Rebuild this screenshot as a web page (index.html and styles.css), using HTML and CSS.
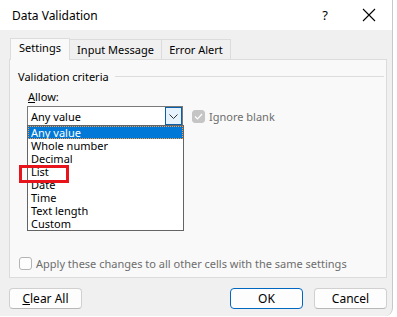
FILE: index.html
```html
<!DOCTYPE html>
<html lang="en">
  <head>
    <meta charset="UTF-8" />
    <meta name="viewport" content="width=device-width, initial-scale=1.0" />
    <title>Data Validation</title>
    <link rel="stylesheet" href="styles.css">
  </head>
  <body>
    <div class="dialog">
      <div class="titlebar">
        <span class="title">Data Validation</span>
        <span class="help-btn">?</span>
        <span class="close-btn">
          <svg width="14" height="14" viewBox="0 0 14 14">
            <path d="M1 1 L13 13 M13 1 L1 13" stroke="#000" stroke-width="1.1" fill="none" />
          </svg>
        </span>
      </div>

      <div class="tabs">
        <div class="tab active">Settings</div>
        <div class="tab">Input Message</div>
        <div class="tab">Error Alert</div>
      </div>

      <div class="panel">
        <div class="group-title">
          <span>Validation criteria</span>
          <span class="group-line"></span>
        </div>

        <label class="field-label"><u>A</u>llow:</label>

        <div class="allow-row">
          <div class="combo">
            <span class="combo-value">Any value</span>
            <span class="combo-btn">
              <svg width="9" height="5" viewBox="0 0 9 5">
                <path d="M0.5 0.5 L4.5 4.5 L8.5 0.5" stroke="#333" stroke-width="1" fill="none" />
              </svg>
            </span>

            <!-- open dropdown list -->
            <ul class="dropdown">
              <li class="selected">Any value</li>
              <li>Whole number</li>
              <li>Decimal</li>
              <li>List</li>
              <li>Date</li>
              <li>Time</li>
              <li>Text length</li>
              <li>Custom</li>
            </ul>
            <span class="mark"></span>
          </div>

          <div class="check disabled">
            <span class="box checked">
              <svg width="9" height="7" viewBox="0 0 9 7">
                <path d="M1 3.5 L3.5 6 L8 1" stroke="#fff" stroke-width="1.2" fill="none" />
              </svg>
            </span>
            <span>Ignore blank</span>
          </div>
        </div>

        <div class="check disabled apply">
          <span class="box"></span>
          <span>Apply these changes to all other cells with the same settings</span>
        </div>
      </div>

      <div class="footer">
        <button class="btn"><u>C</u>lear All</button>
        <div class="footer-right">
          <button class="btn primary">OK</button>
          <button class="btn">Cancel</button>
        </div>
      </div>
    </div>
  </body>
</html>
```

FILE: styles.css
```css
* {
  box-sizing: border-box;
}

body {
  margin: 0;
  background: #ffffff;
  font-family: "Noto Sans", "Open Sans", sans-serif;
  font-size: 11px;
  color: #000;
}

.dialog {
  width: 393px;
  height: 316px;
  background: #f0f0f0;
  border-right: 1px solid #c8c8c8;
  border-radius: 0 0 8px 0;
}

/* Title bar */
.titlebar {
  height: 30px;
  background: #ffffff;
  display: flex;
  align-items: center;
  padding-left: 12px;
}

.title {
  flex: 1;
  font-size: 12px;
}

.help-btn {
  width: 30px;
  font-size: 13px;
  margin-right: 6px;
  text-align: center;
}

.close-btn {
  width: 46px;
  display: flex;
  justify-content: center;
}

/* Tabs */
.tabs {
  display: flex;
  align-items: flex-end;
  margin-top: 7px;
  padding-left: 10px;
  height: 22px;
}

.tab {
  height: 20px;
  border: 1px solid #dcdcdc;
  border-bottom: none;
  border-left: none;
  background: #f0f0f0;
  line-height: 19px;
  text-align: center;
  white-space: nowrap;
}

.tab:nth-child(2) {
  width: 92px;
}

.tab:nth-child(3) {
  width: 69px;
}

.tab.active {
  width: 60px;
  height: 22px;
  border-left: 1px solid #dcdcdc;
  background: #f9f9f9;
  position: relative;
  top: 1px;
  line-height: 17px;
}

/* Tab panel */
.panel {
  margin-left: 9px;
  width: 378px;
  height: 219px;
  background: #f9f9f9;
  border: 1px solid #dcdcdc;
  padding: 9px 0 0 8px;
}

.group-title {
  display: flex;
  align-items: center;
  gap: 6px;
  padding-right: 2px;
  line-height: 15px;
}

.group-line {
  flex: 1;
  height: 1px;
  background: #dcdcdc;
}

.field-label {
  display: block;
  margin: 5px 0 0 10px;
  line-height: 15px;
}

.allow-row {
  display: flex;
  align-items: center;
  margin-top: 2px;
  padding-left: 9px;
}

.combo {
  position: relative;
  width: 156px;
  height: 20px;
  background: #fff;
  border: 1px solid #7a7a7a;
  display: flex;
  align-items: center;
  padding-left: 3px;
}

.combo-value {
  flex: 1;
}

.combo-btn {
  width: 17px;
  height: 18px;
  background: #e5f1fb;
  border: 1px solid #0d5ea8;
  display: flex;
  align-items: center;
  justify-content: center;
}

/* Dropdown popup */
.dropdown {
  position: absolute;
  top: 18px;
  left: -1px;
  width: 157px;
  margin: 0;
  padding: 0;
  list-style: none;
  background: #fff;
  border: 1px solid #646464;
}

.dropdown li {
  height: 13px;
  line-height: 13px;
  padding-left: 3px;
}

.dropdown li.selected {
  background: #0078d7;
  color: #fff;
  outline: 1px dotted #ff9a3c;
  outline-offset: -1px;
}

/* Red highlight around "List" */
.mark {
  position: absolute;
  top: 58px;
  left: -9px;
  width: 50px;
  height: 18px;
  border: 3px solid #e8141b;
}

/* Checkboxes */
.check {
  display: flex;
  align-items: center;
  gap: 4px;
}

.check.disabled {
  color: #6d6d6d;
}

.allow-row .check {
  margin-left: 9px;
}

.box {
  width: 13px;
  height: 13px;
  border: 1px solid #b4b4b4;
  border-radius: 3px;
  background: #fdfdfd;
  display: flex;
  align-items: center;
  justify-content: center;
}

.box.checked {
  background: #c5c5c5;
  border-color: #c5c5c5;
}

.apply {
  margin-top: 130px;
  padding-left: 1px;
}

/* Footer buttons */
.footer {
  display: flex;
  justify-content: space-between;
  padding: 10px 5px 0 9px;
}

.footer-right {
  display: flex;
  gap: 11px;
}

.btn {
  width: 73px;
  height: 21px;
  font-family: inherit;
  font-size: 12px;
  color: #000;
  background: #fdfdfd;
  border: 1px solid #d0d0d0;
  border-bottom-color: #b8b8b8;
  border-radius: 4px;
  padding: 0;
}

.btn.primary {
  border-color: #0067c0;
}
```
